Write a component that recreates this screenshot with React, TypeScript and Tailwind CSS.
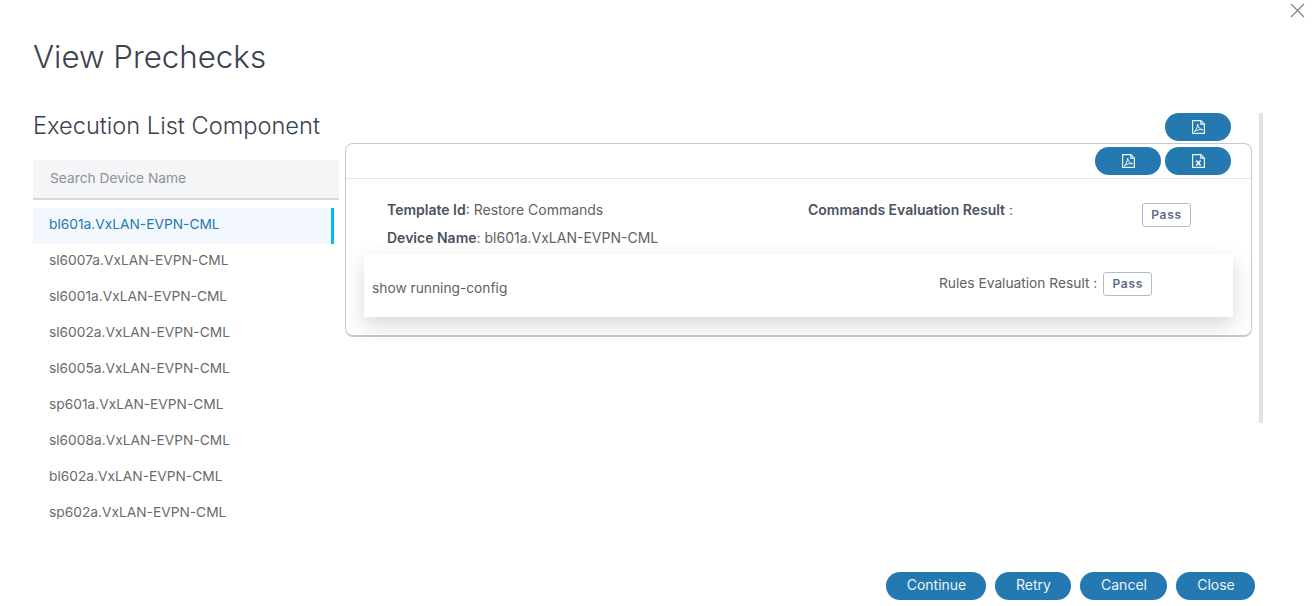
import React from "react";

const devices = [
  "bl601a.VxLAN-EVPN-CML",
  "sl6007a.VxLAN-EVPN-CML",
  "sl6001a.VxLAN-EVPN-CML",
  "sl6002a.VxLAN-EVPN-CML",
  "sl6005a.VxLAN-EVPN-CML",
  "sp601a.VxLAN-EVPN-CML",
  "sl6008a.VxLAN-EVPN-CML",
  "bl602a.VxLAN-EVPN-CML",
  "sp602a.VxLAN-EVPN-CML",
];

function FileIcon({ kind }: { kind: "pdf" | "xls" }) {
  return (
    <svg width="13" height="14" viewBox="0 0 13 14" fill="none" stroke="#eef5f9" strokeWidth="1.200">
      <path d="M.6.6h8.200l3.600 3.600v9.200H.6z" />
      <path d="M8.800.6v3.600h3.600" />
      {kind === "pdf" ? (
        <path d="M2 12c1.700-1.200 3.200-4 3.700-7.800.5 3.300 2.200 5 5 5.600-2.800-.5-6-.1-8.700 2.200z" strokeWidth="1" />
      ) : (
        <path d="M4.200 6.500l4.400 5M8.600 6.500l-4.400 5" strokeWidth="1.700" />
      )}
    </svg>
  );
}

function IconButton({ kind }: { kind: "pdf" | "xls" }) {
  return (
    <button className="flex h-[28px] w-[66px] items-center justify-center rounded-[14px] bg-[#2479b0]">
      <FileIcon kind={kind} />
    </button>
  );
}

function PassBadge() {
  return (
    <span className="flex h-[24px] w-[49px] items-center justify-center rounded-[3px] border border-[#aebdd2] bg-white pb-[1px] text-[12px] font-semibold tracking-[0.7px] text-[#5b6b85]">
      Pass
    </span>
  );
}

function FooterButton({ label, width }: { label: string; width: string }) {
  return (
    <button className={`h-[28px] rounded-[14px] bg-[#2479b0] pb-[3px] pl-[1px] text-[14px] text-[#eaf3f8] ${width}`}>
      {label}
    </button>
  );
}

export default function App() {
  return (
    <div className="relative h-[606px] w-[1312px] overflow-hidden bg-white font-['Inter',sans-serif] text-[#606266]">
      <svg className="absolute right-[7px] top-[3px]" width="15" height="15" viewBox="0 0 15 15" stroke="#7b8794" strokeWidth="1.300">
        <path d="M1 1l13 13M14 1L1 14" />
      </svg>

      <h1 className="pl-[33px] pt-[38px] text-[31.300px] font-light leading-[38px] text-[#39424e]">
        View Prechecks
      </h1>

      <div className="mt-[38px] flex h-[310px] items-start pl-[33px]">
        <div className="w-[306px] shrink-0">
          <h2 className="mt-[-2px] h-[48px] text-[23.600px] font-light leading-[28px] whitespace-nowrap text-[#39424e]">
            Execution List Component
          </h2>
          <div className="flex h-[40px] items-center border-b-2 border-[#d5d9de] bg-[#f3f5f7] pb-[2px] pl-[17px] text-[13.750px] text-[#8c929a]">
            Search Device Name
          </div>
          <ul className="mt-[8px] h-[311px] w-[301px] overflow-hidden text-[13.750px]">
            {devices.map((d, i) => (
              <li
                key={d}
                className={
                  i === 0
                    ? "flex h-[36px] items-center border-r-[3px] border-[#00bceb] bg-[#f2f8fd] pb-[4px] pl-[16px] text-[#2479b0]"
                    : "flex h-[36px] items-center pb-[4px] pl-[16px] text-[#6a6a6c]"
                }
              >
                {d}
              </li>
            ))}
          </ul>
        </div>

        <div className="ml-[6px] mt-[-1px] w-[907px] shrink-0">
          <div className="flex justify-end pr-[21px]">
            <IconButton kind="pdf" />
          </div>
          <div className="mt-[2px] h-[194px] rounded-[8px] border border-b-2 border-[#c2cad6] bg-white">
            <div className="flex h-[35px] items-start justify-end gap-[4px] border-b border-[#e2e5e9] pr-[20px] pt-[3px]">
              <IconButton kind="pdf" />
              <IconButton kind="xls" />
            </div>
            <div className="flex h-[75px] pl-[41px] pt-[17px] text-[14px]">
              <div className="w-[421px] leading-[28px]">
                <div>
                  <b className="font-semibold text-[#4a5260]">Template Id</b>: Restore Commands
                </div>
                <div>
                  <b className="font-semibold text-[#4a5260]">Device Name</b>: bl601a.VxLAN-EVPN-CML
                </div>
              </div>
              <div className="w-[334px] leading-[28px]">
                <b className="font-semibold text-[#4a5260]">Commands Evaluation Result</b> :
              </div>
              <div className="mt-[7px]">
                <PassBadge />
              </div>
            </div>
            <div className="ml-[18px] flex h-[63px] w-[869px] items-center bg-white pl-[8px] text-[13.750px] shadow-[0_8px_20px_rgba(0,0,0,0.16)]">
              <span className="mt-[5px] w-[567px]">show running-config</span>
              <span className="mt-[-4px] flex items-center gap-[6px]">
                Rules Evaluation Result :
                <span className="mt-[1px]">
                  <PassBadge />
                </span>
              </span>
            </div>
          </div>
        </div>

        <div className="ml-[7px] mt-[-1px] h-[310px] w-[4px] shrink-0 bg-[#e3e3e3]" />
      </div>

      <div className="absolute bottom-[6px] right-[57px] flex gap-[9px]">
        <FooterButton label="Continue" width="w-[100px]" />
        <FooterButton label="Retry" width="w-[76px]" />
        <FooterButton label="Cancel" width="w-[87px]" />
        <FooterButton label="Close" width="w-[79px]" />
      </div>
    </div>
  );
}
